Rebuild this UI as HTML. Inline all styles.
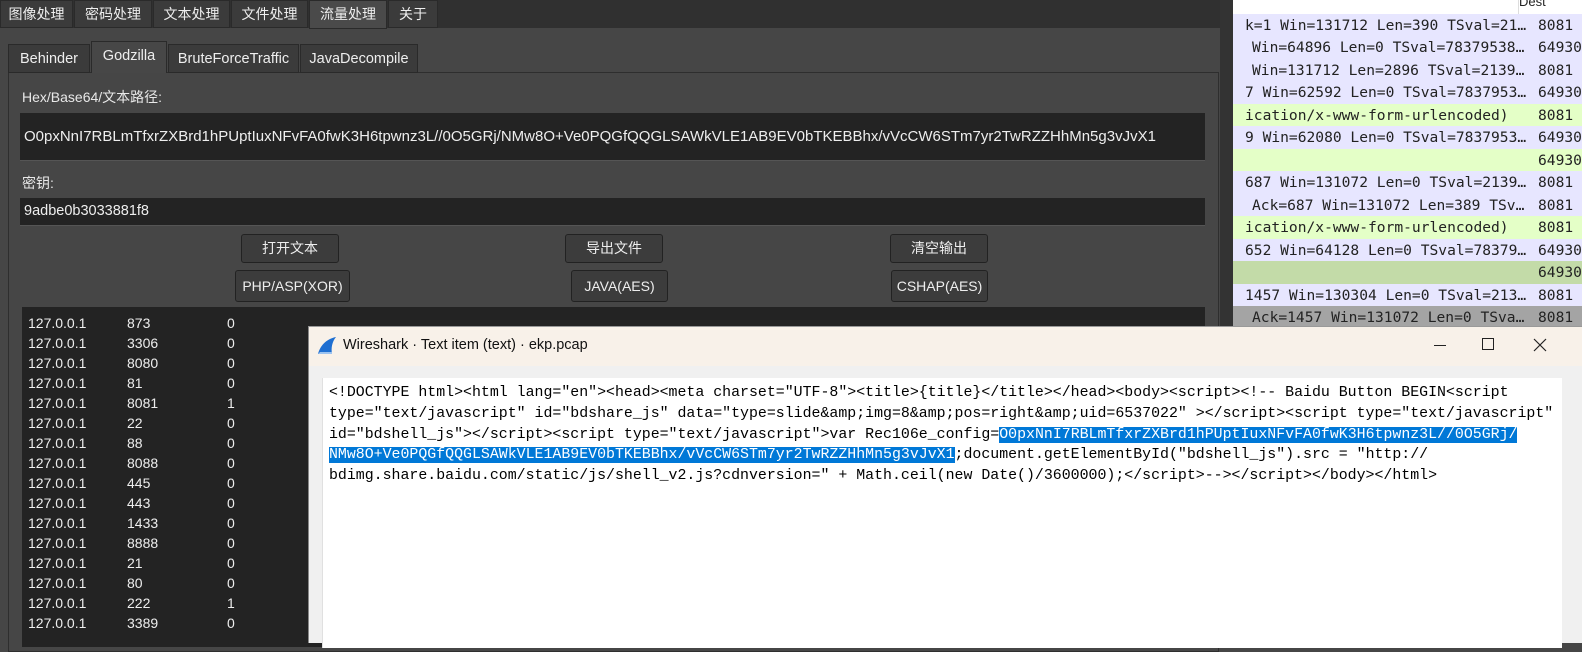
<!DOCTYPE html>
<html><head><meta charset="utf-8"><style>
*{margin:0;padding:0;box-sizing:border-box}
body{width:1582px;height:643px;overflow:hidden;position:relative;background:#464646;font-family:"Liberation Sans","Noto Sans CJK SC",sans-serif;color:#e8e8e8;font-size:14px}
.a{position:absolute}
.tab{position:absolute;top:0;height:28px;background:#3b3b3b;border:1px solid #2a2a2a;text-align:center;line-height:27px;font-size:14px;color:#eee}
.stab{position:absolute;top:44px;height:29px;background:#3b3b3b;border:1px solid #2a2a2a;text-align:center;line-height:29px;font-size:14.5px;color:#eee}
.btn{position:absolute;background:#3c3c3c;border:1px solid #222;border-radius:3px;text-align:center;font-size:14px;color:#eee}
.inp{position:absolute;background:#232323;border-bottom:1px solid #555}
.row{position:absolute;left:0;width:349px;height:23px;font-family:"DejaVu Sans Mono",monospace;font-size:14.6px;line-height:23px;color:#222;white-space:pre;overflow:hidden;padding-left:12px}
.row span{position:absolute;left:305px}
.tb{position:absolute;left:28px;font-size:14px;line-height:20px;color:#eee}
.mono{font-family:"Liberation Mono",monospace;font-size:14.9px;line-height:20.8px;color:#000;white-space:pre}
.sel{background:#0078d7;color:#fff}
</style></head><body>
<div class="a" style="left:0;top:0;width:1232px;height:28px;background:#303030"></div>
<div class="tab" style="left:0;width:73px">图像处理</div>
<div class="tab" style="left:74px;width:78px">密码处理</div>
<div class="tab" style="left:153px;width:77px">文本处理</div>
<div class="tab" style="left:231px;width:77px">文件处理</div>
<div class="tab" style="left:309px;width:78px;background:#4a4a4a;height:29px">流量处理</div>
<div class="tab" style="left:388px;width:50px">关于</div>

<div class="a" style="left:8px;top:72px;width:1211px;height:580px;border:1px solid #2e2e2e;background:#464646"></div>
<div class="stab" style="left:8px;width:82px">Behinder</div>
<div class="stab" style="left:91px;width:76px;top:41px;height:32px;background:#474747;border-bottom:none">Godzilla</div>
<div class="stab" style="left:168px;width:131px">BruteForceTraffic</div>
<div class="stab" style="left:300px;width:118px">JavaDecompile</div>

<div class="a" style="left:22px;top:87px;font-size:14px">Hex/Base64/文本路径:</div>
<div class="inp" style="left:20px;top:113px;width:1185px;height:48px"></div>
<div class="a" style="left:24px;top:128px;font-size:15px;white-space:nowrap;color:#eee">O0pxNnI7RBLmTfxrZXBrd1hPUptIuxNFvFA0fwK3H6tpwnz3L//0O5GRj/NMw8O+Ve0PQGfQQGLSAWkVLE1AB9EV0bTKEBBhx/vVcCW6STm7yr2TwRZZHhMn5g3vJvX1</div>
<div class="a" style="left:22px;top:173px;font-size:14px">密钥:</div>
<div class="inp" style="left:20px;top:198px;width:1185px;height:28px"></div>
<div class="a" style="left:24px;top:203px;font-size:14.5px;color:#eee">9adbe0b3033881f8</div>

<div class="btn" style="left:241px;top:234px;width:98px;height:29px;line-height:27px">打开文本</div>
<div class="btn" style="left:565px;top:234px;width:98px;height:29px;line-height:27px">导出文件</div>
<div class="btn" style="left:890px;top:234px;width:98px;height:29px;line-height:27px">清空输出</div>
<div class="btn" style="left:235px;top:270px;width:115px;height:32px;line-height:30px">PHP/ASP(XOR)</div>
<div class="btn" style="left:571px;top:270px;width:97px;height:32px;line-height:30px">JAVA(AES)</div>
<div class="btn" style="left:891px;top:270px;width:97px;height:32px;line-height:30px">CSHAP(AES)</div>

<div class="a" style="left:22px;top:307px;width:1183px;height:340px;background:#232323"></div>
<div class="a" style="left:0;top:313px">
<div class="tb" style="top:0">127.0.0.1</div><div class="tb" style="top:20px">127.0.0.1</div><div class="tb" style="top:40px">127.0.0.1</div><div class="tb" style="top:60px">127.0.0.1</div><div class="tb" style="top:80px">127.0.0.1</div><div class="tb" style="top:100px">127.0.0.1</div><div class="tb" style="top:120px">127.0.0.1</div><div class="tb" style="top:140px">127.0.0.1</div><div class="tb" style="top:160px">127.0.0.1</div><div class="tb" style="top:180px">127.0.0.1</div><div class="tb" style="top:200px">127.0.0.1</div><div class="tb" style="top:220px">127.0.0.1</div><div class="tb" style="top:240px">127.0.0.1</div><div class="tb" style="top:260px">127.0.0.1</div><div class="tb" style="top:280px">127.0.0.1</div><div class="tb" style="top:300px">127.0.0.1</div>
<div class="tb" style="left:127px;top:0">873</div><div class="tb" style="left:127px;top:20px">3306</div><div class="tb" style="left:127px;top:40px">8080</div><div class="tb" style="left:127px;top:60px">81</div><div class="tb" style="left:127px;top:80px">8081</div><div class="tb" style="left:127px;top:100px">22</div><div class="tb" style="left:127px;top:120px">88</div><div class="tb" style="left:127px;top:140px">8088</div><div class="tb" style="left:127px;top:160px">445</div><div class="tb" style="left:127px;top:180px">443</div><div class="tb" style="left:127px;top:200px">1433</div><div class="tb" style="left:127px;top:220px">8888</div><div class="tb" style="left:127px;top:240px">21</div><div class="tb" style="left:127px;top:260px">80</div><div class="tb" style="left:127px;top:280px">222</div><div class="tb" style="left:127px;top:300px">3389</div>
<div class="tb" style="left:227px;top:0">0</div><div class="tb" style="left:227px;top:20px">0</div><div class="tb" style="left:227px;top:40px">0</div><div class="tb" style="left:227px;top:60px">0</div><div class="tb" style="left:227px;top:80px">1</div><div class="tb" style="left:227px;top:100px">0</div><div class="tb" style="left:227px;top:120px">0</div><div class="tb" style="left:227px;top:140px">0</div><div class="tb" style="left:227px;top:160px">0</div><div class="tb" style="left:227px;top:180px">0</div><div class="tb" style="left:227px;top:200px">0</div><div class="tb" style="left:227px;top:220px">0</div><div class="tb" style="left:227px;top:240px">0</div><div class="tb" style="left:227px;top:260px">0</div><div class="tb" style="left:227px;top:280px">1</div><div class="tb" style="left:227px;top:300px">0</div>
</div>

<!-- right wireshark list -->
<div class="a" style="left:1220px;top:0;width:13px;height:330px;background:#333"></div>
<div class="a" style="left:1233px;top:0;width:349px;height:330px;background:#fff;overflow:hidden">
<div class="a" style="left:286px;top:-6px;font-size:13px;color:#222">Dest</div>
<div class="a" style="left:285px;top:0;width:1px;height:14px;background:#ddd"></div>
<div class="row" style="top:14px;background:#e7e6ff">k=1 Win=131712 Len=390 TSval=21…<span>8081</span></div>
<div class="row" style="top:36px;background:#e7e6ff;padding-left:19px">Win=64896 Len=0 TSval=78379538…<span>64930</span></div>
<div class="row" style="top:59px;background:#e7e6ff;padding-left:19px">Win=131712 Len=2896 TSval=2139…<span>8081</span></div>
<div class="row" style="top:81px;background:#e7e6ff">7 Win=62592 Len=0 TSval=7837953…<span>64930</span></div>
<div class="row" style="top:104px;background:#e4ffc7">ication/x-www-form-urlencoded)<span>8081</span></div>
<div class="row" style="top:126px;background:#e7e6ff">9 Win=62080 Len=0 TSval=7837953…<span>64930</span></div>
<div class="row" style="top:149px;background:#e4ffc7"><span>64930</span></div>
<div class="row" style="top:171px;background:#e7e6ff">687 Win=131072 Len=0 TSval=2139…<span>8081</span></div>
<div class="row" style="top:194px;background:#e7e6ff;padding-left:19px">Ack=687 Win=131072 Len=389 TSv…<span>8081</span></div>
<div class="row" style="top:216px;background:#e4ffc7">ication/x-www-form-urlencoded)<span>8081</span></div>
<div class="row" style="top:239px;background:#e7e6ff">652 Win=64128 Len=0 TSval=78379…<span>64930</span></div>
<div class="row" style="top:261px;background:#c3dba8"><span>64930</span></div>
<div class="row" style="top:284px;background:#e7e6ff">1457 Win=130304 Len=0 TSval=213…<span>8081</span></div>
<div class="row" style="top:306px;background:#a4a4a4;padding-left:19px">Ack=1457 Win=131072 Len=0 TSva…<span>8081</span></div>
</div>

<!-- dialog -->
<div class="a" style="left:308px;top:326px;width:1274px;height:317px;background:#f0f0f0;border-left:1px solid #888;border-top:1px solid #999"></div>
<div class="a" style="left:309px;top:327px;width:1273px;height:39px;background:#f8f1e9"></div>
<svg class="a" style="left:316px;top:336px" width="22" height="20" viewBox="0 0 22 20"><path d="M2 18 C4 10 10 3 20 1 C16 6 15 12 16 18 Z" fill="#1f6fd1"/><path d="M2 18 L16 18 L16 16 L4 16Z" fill="#9cc3f0"/></svg>
<div class="a" style="left:343px;top:337px;font-size:14.5px;color:#111">Wireshark · Text item (text) · ekp.pcap</div>
<div class="a" style="left:1434px;top:345px;width:12px;height:1px;background:#222"></div>
<div class="a" style="left:1482px;top:338px;width:12px;height:12px;border:1px solid #222"></div>
<svg class="a" style="left:1533px;top:338px" width="14" height="14"><path d="M1 1L13 13M13 1L1 13" stroke="#222" stroke-width="1.2"/></svg>
<div class="a" style="left:322px;top:378px;width:1240px;height:270px;background:#fff;border-left:1px solid #e0e0e0"></div>
<div class="a mono" style="left:329px;top:383px">&lt;!DOCTYPE html&gt;&lt;html lang="en"&gt;&lt;head&gt;&lt;meta charset="UTF-8"&gt;&lt;title&gt;{title}&lt;/title&gt;&lt;/head&gt;&lt;body&gt;&lt;script&gt;&lt;!-- Baidu Button BEGIN&lt;script
type="text/javascript" id="bdshare_js" data="type=slide&amp;amp;img=8&amp;amp;pos=right&amp;amp;uid=6537022" &gt;&lt;/script&gt;&lt;script type="text/javascript"
id="bdshell_js"&gt;&lt;/script&gt;&lt;script type="text/javascript"&gt;var Rec106e_config=<span class="sel">O0pxNnI7RBLmTfxrZXBrd1hPUptIuxNFvFA0fwK3H6tpwnz3L//0O5GRj/</span>
<span class="sel">NMw8O+Ve0PQGfQQGLSAWkVLE1AB9EV0bTKEBBhx/vVcCW6STm7yr2TwRZZHhMn5g3vJvX1</span>;document.getElementById("bdshell_js").src = "http://
bdimg.share.baidu.com/static/js/shell_v2.js?cdnversion=" + Math.ceil(new Date()/3600000);&lt;/script&gt;--&gt;&lt;/script&gt;&lt;/body&gt;&lt;/html&gt;</div>
</body></html>
